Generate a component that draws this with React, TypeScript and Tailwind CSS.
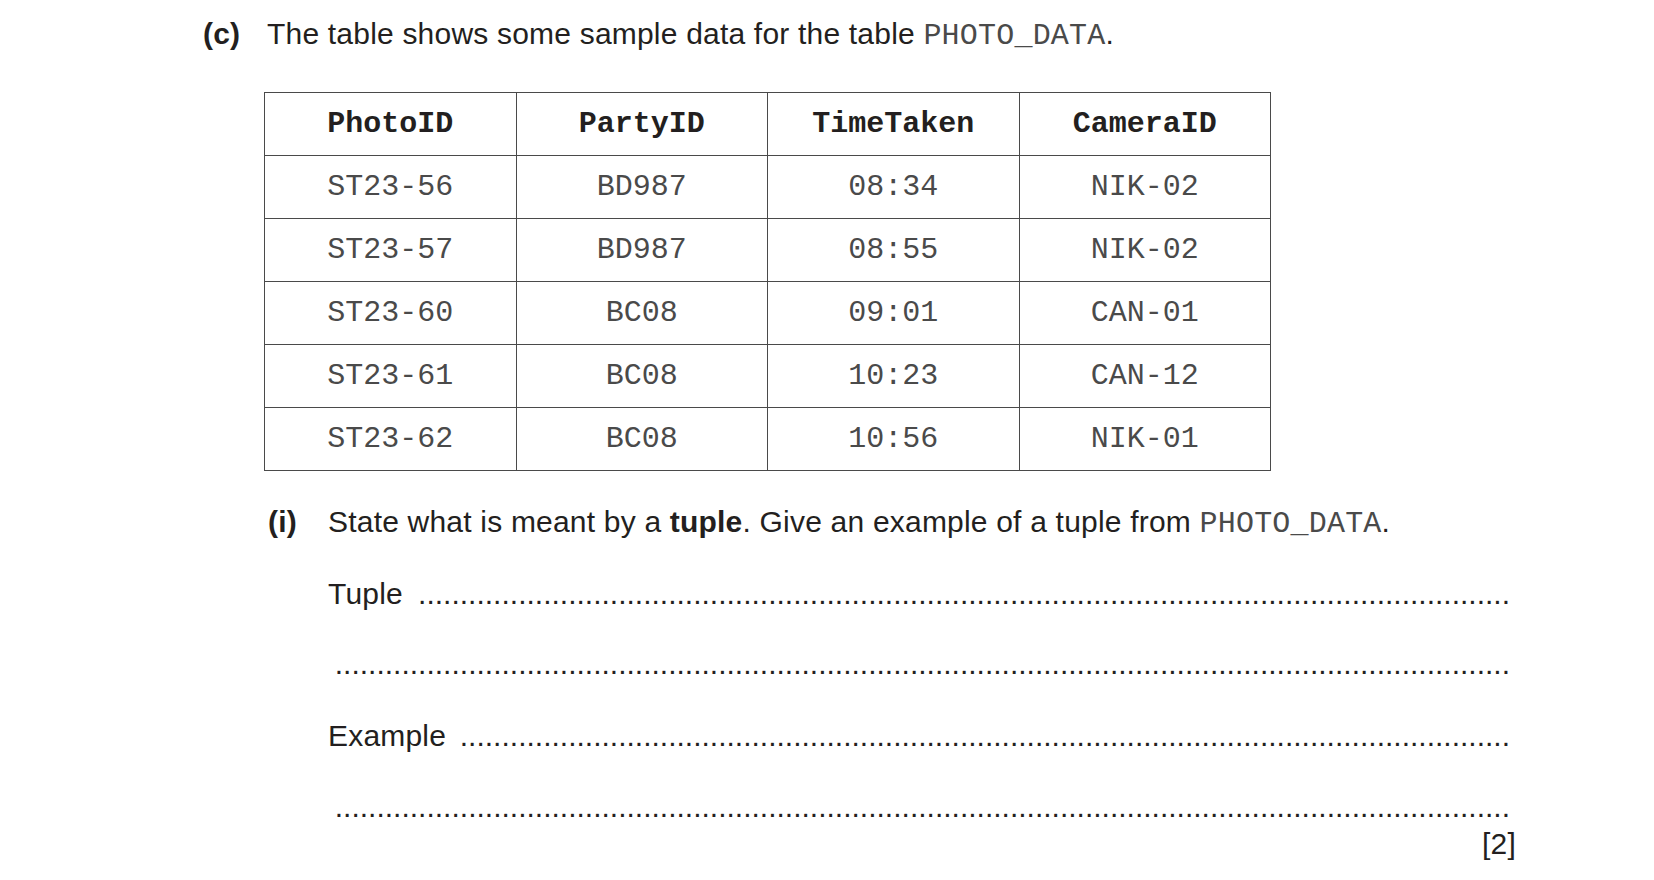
import React from "react";

const header = ["PhotoID", "PartyID", "TimeTaken", "CameraID"];
const rows = [
  ["ST23-56", "BD987", "08:34", "NIK-02"],
  ["ST23-57", "BD987", "08:55", "NIK-02"],
  ["ST23-60", "BC08", "09:01", "CAN-01"],
  ["ST23-61", "BC08", "10:23", "CAN-12"],
  ["ST23-62", "BC08", "10:56", "NIK-01"],
];

function Dots({ n }: { n: number }) {
  return (
    <span
      dir="rtl"
      className="flex-1 overflow-hidden whitespace-nowrap tracking-normal"
    >
      {".".repeat(n)}
    </span>
  );
}

function Mono({ children }: { children: React.ReactNode }) {
  return (
    <span className="font-['Liberation_Mono','Courier_New',monospace] tracking-[0.2px] text-[#4a4a4a]">
      {children}
    </span>
  );
}

export default function App() {
  return (
    <div className="w-[1654px] h-[880px] overflow-hidden bg-white text-[#231f20] font-['Liberation_Sans',Arial,sans-serif] text-[30px] leading-[34px] tracking-[0.2px]">
      {/* (c) heading */}
      <div className="flex pt-[17px] pl-[203px]">
        <span className="w-[64px] font-bold">(c)</span>
        <span>
          The table shows some sample data for the table <Mono>PHOTO_DATA</Mono>.
        </span>
      </div>

      {/* table */}
      <div className="ml-[264px] mt-[39px] w-[1007px] grid grid-cols-4 border-l border-t border-[#4a4a4a] font-['Liberation_Mono','Courier_New',monospace] tracking-normal">
        {header.map((h) => (
          <div
            key={h}
            className="h-[63px] flex items-center justify-center border-r border-b border-[#4a4a4a] font-bold text-[#231f20]"
          >
            {h}
          </div>
        ))}
        {rows.map((r, i) =>
          r.map((c, j) => (
            <div
              key={`${i}-${j}`}
              className="h-[63px] flex items-center justify-center border-r border-b border-[#4a4a4a] text-[#4a4a4a]"
            >
              {c}
            </div>
          ))
        )}
      </div>

      {/* (i) question */}
      <div className="flex mt-[34px] pl-[268px]">
        <span className="w-[60px] font-bold">(i)</span>
        <span>
          State what is meant by a <b>tuple</b>. Give an example of a tuple from <Mono>PHOTO_DATA</Mono>.
        </span>
      </div>

      {/* answer lines */}
      <div className="ml-[328px] w-[1182px]">
        <div className="flex mt-[36px]">
          <span className="mr-[14px]">Tuple</span>
          <Dots n={131} />
        </div>
        <div className="flex mt-[36px]">
          <Dots n={141} />
        </div>
        <div className="flex mt-[38px]">
          <span className="mr-[12px]">Example</span>
          <Dots n={126} />
        </div>
        <div className="flex mt-[37px]">
          <Dots n={141} />
        </div>
      </div>
      <div className="w-[1516px] text-right mt-[3px]">[2]</div>
    </div>
  );
}
